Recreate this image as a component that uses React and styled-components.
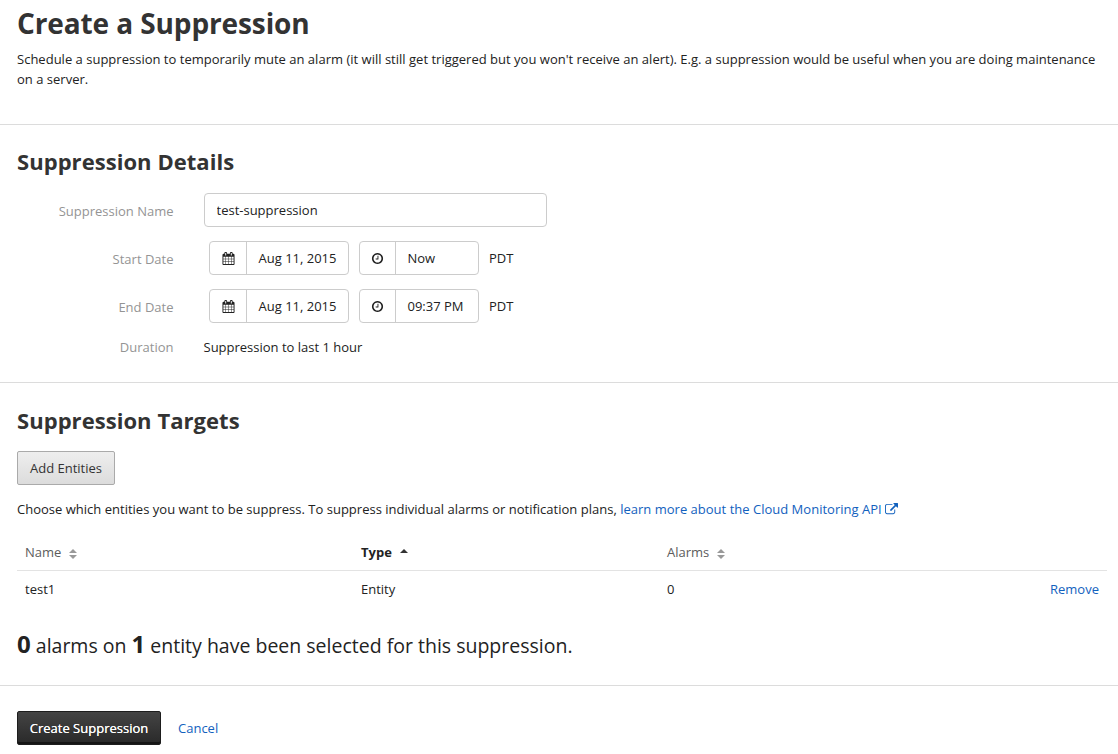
import React from "react";
import styled, { createGlobalStyle, css } from "styled-components";

const GlobalStyle = createGlobalStyle`
  *, *::before, *::after { box-sizing: border-box; }
  body {
    margin: 0;
    background: #fff;
    color: #222;
    font: 13px/20px "Open Sans", "Liberation Sans", sans-serif;
    overflow: hidden;
  }
`;

const Page = styled.main`
  display: flex;
  flex-direction: column;
`;

const Section = styled.section`
  height: ${(p) => p.$height}px;
  padding: ${(p) => p.$top}px 11px 0 17px;
  border-bottom: ${(p) => (p.$last ? "0" : "1px solid #dcdcdc")};
`;

const PageTitle = styled.h1`
  margin: 0 0 7px;
  font-size: 28px;
  line-height: 38px;
  font-weight: 700;
  letter-spacing: -0.11px;
  color: #333;
`;

const SectionTitle = styled.h2`
  margin: 0 0 ${(p) => p.$gap}px;
  font-size: 22px;
  line-height: 30px;
  font-weight: 700;
  letter-spacing: 0.05px;
  color: #333;
`;

const Text = styled.p`
  margin: 0;
  letter-spacing: 0.01px;
`;

const Field = styled.div`
  display: flex;
  align-items: center;
  height: ${(p) => p.$height || 34}px;
  margin-bottom: 14px;
`;

const Label = styled.label`
  width: 156.5px;
  margin-right: 30.5px;
  padding-top: ${(p) => p.$drop ?? 2}px;
  text-align: right;
  color: #949494;
`;

const NameInput = styled.input`
  width: 343px;
  height: 34px;
  padding: 0 11.5px;
  border: 1px solid #ccc;
  border-radius: 4px;
  font: inherit;
  color: inherit;
`;

const Duration = styled.span`
  margin-left: -0.5px;
`;

const Pickers = styled.div`
  display: flex;
  align-items: center;
  gap: 10px;
  padding-left: 5px;
`;

const Picker = styled.div`
  display: flex;
  width: ${(p) => p.$width}px;
  height: 34px;
  border: 1px solid #ccc;
  border-radius: 4px;
`;

const PickerIcon = styled.span`
  display: flex;
  align-items: center;
  justify-content: center;
  width: ${(p) => p.$width}px;
  border-right: 1px solid #ccc;
`;

const PickerValue = styled.span`
  padding-left: 11.5px;
  line-height: 32px;
  white-space: nowrap;
`;

const buttonBase = css`
  display: block;
  height: 34px;
  padding: 0;
  border-radius: 2px;
  font: inherit;
`;

const AddButton = styled.button`
  ${buttonBase}
  width: 98px;
  margin-bottom: 14px;
  border: 1px solid #aaa;
  background: linear-gradient(#eee, #dcdcdc);
  color: #333;
`;

const SubmitButton = styled.button`
  ${buttonBase}
  width: 144px;
  border: 1px solid #1d1d1d;
  background: linear-gradient(#444, #292929);
  box-shadow: inset 0 -2px 0 #151515;
  color: #fff;
  text-shadow: 0 0 0.5px #fff;
`;

const Link = styled.a`
  color: #1261be;
  text-decoration: none;
`;

const Table = styled.table`
  width: 1090px;
  margin-top: 14px;
  border-collapse: collapse;
  table-layout: fixed;

  th, td {
    height: 37px;
    padding: 0 8px;
    text-align: left;
    font-weight: 400;
  }
  thead tr { border-bottom: 1px solid #e3e3e3; }
`;

const HeadCell = styled.th`
  width: ${(p) => p.$width}px;
  && {
    padding-top: 2px;
    color: ${(p) => (p.$active ? "#222" : "#5c5c5c")};
    font-weight: ${(p) => (p.$active ? 700 : 400)};
  }
  svg { margin-left: 8px; }
`;

const ActionCell = styled.td`
  && { text-align: right; }
`;

const Summary = styled.p`
  margin: 20px 0 0;
  font-size: 19.5px;
  line-height: 34px;
  strong { font-size: 24px; }
`;

const Actions = styled.div`
  display: flex;
  align-items: center;
  gap: 17px;
`;

const Glyph = styled.svg`
  width: ${(p) => p.$size}px;
  height: ${(p) => p.$size}px;
  fill: currentColor;
  flex: none;
`;

const LinkGlyph = styled(Glyph)`
  margin-left: 3px;
  vertical-align: -2px;
`;

const SortGlyph = styled.svg`
  width: 8px;
  height: 10px;
  vertical-align: -2px;
  fill: ${(p) => (p.$active ? "#333" : "#999")};
`;

const CalendarIcon = () => (
  <Glyph $size={13} viewBox="0 0 1792 1792">
    <path d="M192 1664h288v-288h-288v288zm352 0h320v-288h-320v288zm-352-352h288v-320h-288v320zm352 0h320v-320h-320v320zm-352-384h288v-288h-288v288zm736 736h320v-288h-320v288zm-384-736h320v-288h-320v288zm768 736h288v-288h-288v288zm-384-352h320v-320h-320v320zm-352-864v-288q0-13-9.5-22.5t-22.5-9.5h-64q-13 0-22.5 9.5t-9.5 22.5v288q0 13 9.5 22.5t22.5 9.5h64q13 0 22.5-9.5t9.5-22.5zm736 864h288v-320h-288v320zm-384-384h320v-288h-320v288zm384 0h288v-288h-288v288zm32-480v-288q0-13-9.5-22.5t-22.5-9.5h-64q-13 0-22.5 9.5t-9.5 22.5v288q0 13 9.5 22.5t22.5 9.5h64q13 0 22.5-9.5t9.5-22.5zm384-64v1280q0 52-38 90t-90 38h-1408q-52 0-90-38t-38-90v-1280q0-52 38-90t90-38h128v-96q0-66 47-113t113-47h64q66 0 113 47t47 113v96h384v-96q0-66 47-113t113-47h64q66 0 113 47t47 113v96h128q52 0 90 38t38 90z" />
  </Glyph>
);

const ClockIcon = () => (
  <Glyph $size={13} viewBox="0 0 1792 1792">
    <path d="M1024 544v448q0 14-9 23t-23 9h-320q-14 0-23-9t-9-23v-64q0-14 9-23t23-9h224v-352q0-14 9-23t23-9h64q14 0 23 9t9 23zm416 352q0-148-73-273t-198-198-273-73-273 73-198 198-73 273 73 273 198 198 273 73 273-73 198-198 73-273zm224 0q0 209-103 385.5t-279.5 279.5-385.5 103-385.5-103-279.5-279.5-103-385.5 103-385.5 279.5-279.5 385.5-103 385.5 103 279.5 279.5 103 385.5z" />
  </Glyph>
);

const ExternalLinkIcon = () => (
  <LinkGlyph $size={13} viewBox="0 0 1792 1792">
    <path d="M1408 928v320q0 119-84.5 203.5t-203.5 84.5h-832q-119 0-203.5-84.5t-84.5-203.5v-832q0-119 84.5-203.5t203.5-84.5h704q14 0 23 9t9 23v64q0 14-9 23t-23 9h-704q-66 0-113 47t-47 113v832q0 66 47 113t113 47h832q66 0 113-47t47-113v-320q0-14 9-23t23-9h64q14 0 23 9t9 23zm384-864v512q0 26-19 45t-45 19-45-19l-176-176-652 652q-10 10-23 10t-23-10l-114-114q-10-10-10-23t10-23l652-652-176-176q-19-19-19-45t19-45 45-19h512q26 0 45 19t19 45z" />
  </LinkGlyph>
);

const SortIcon = ({ active }) => (
  <SortGlyph viewBox="0 0 8 10" $active={active}>
    {active ? <path d="M0 4L4 0l4 4z" /> : <path d="M0 4L4 0l4 4zM0 6h8L4 10z" />}
  </SortGlyph>
);

const schedule = [
  { label: "Start Date", date: "Aug 11, 2015", time: "Now" },
  { label: "End Date", date: "Aug 11, 2015", time: "09:37 PM" },
];

export default function App() {
  return (
    <Page>
      <GlobalStyle />
      <Section $height={125} $top={4}>
        <PageTitle>Create a Suppression</PageTitle>
        <Text>
          Schedule a suppression to temporarily mute an alarm (it will still get triggered but you
          won't receive an alert). E.g. a suppression would be useful when you are doing maintenance
          on a server.
        </Text>
      </Section>

      <Section $height={258} $top={21}>
        <SectionTitle $gap={17}>Suppression Details</SectionTitle>
        <Field>
          <Label htmlFor="name">Suppression Name</Label>
          <NameInput id="name" defaultValue="test-suppression" />
        </Field>
        {schedule.map((row) => (
          <Field key={row.label}>
            <Label>{row.label}</Label>
            <Pickers>
              <Picker $width={140}>
                <PickerIcon $width={37}><CalendarIcon /></PickerIcon>
                <PickerValue>{row.date}</PickerValue>
              </Picker>
              <Picker $width={120}>
                <PickerIcon $width={36}><ClockIcon /></PickerIcon>
                <PickerValue>{row.time}</PickerValue>
              </Picker>
              <span>PDT</span>
            </Pickers>
          </Field>
        ))}
        <Field $height={20}>
          <Label $drop={0}>Duration</Label>
          <Duration>Suppression to last 1 hour</Duration>
        </Field>
      </Section>

      <Section $height={303} $top={22}>
        <SectionTitle $gap={16}>Suppression Targets</SectionTitle>
        <AddButton type="button">Add Entities</AddButton>
        <Text>
          Choose which entities you want to be suppress. To suppress individual alarms or
          notification plans,{" "}
          <Link href="#">learn more about the Cloud Monitoring API<ExternalLinkIcon /></Link>
        </Text>
        <Table>
          <thead>
            <tr>
              <HeadCell $width={336}>Name<SortIcon /></HeadCell>
              <HeadCell $width={306} $active>Type<SortIcon active /></HeadCell>
              <HeadCell $width={306}>Alarms<SortIcon /></HeadCell>
              <HeadCell $width={142} />
            </tr>
          </thead>
          <tbody>
            <tr>
              <td>test1</td>
              <td>Entity</td>
              <td>0</td>
              <ActionCell><Link href="#">Remove</Link></ActionCell>
            </tr>
          </tbody>
        </Table>
        <Summary>
          <strong>0</strong> alarms on <strong>1</strong> entity have been selected for this suppression.
        </Summary>
      </Section>

      <Section $height={68} $top={25} $last>
        <Actions>
          <SubmitButton type="button">Create Suppression</SubmitButton>
          <Link href="#">Cancel</Link>
        </Actions>
      </Section>
    </Page>
  );
}
